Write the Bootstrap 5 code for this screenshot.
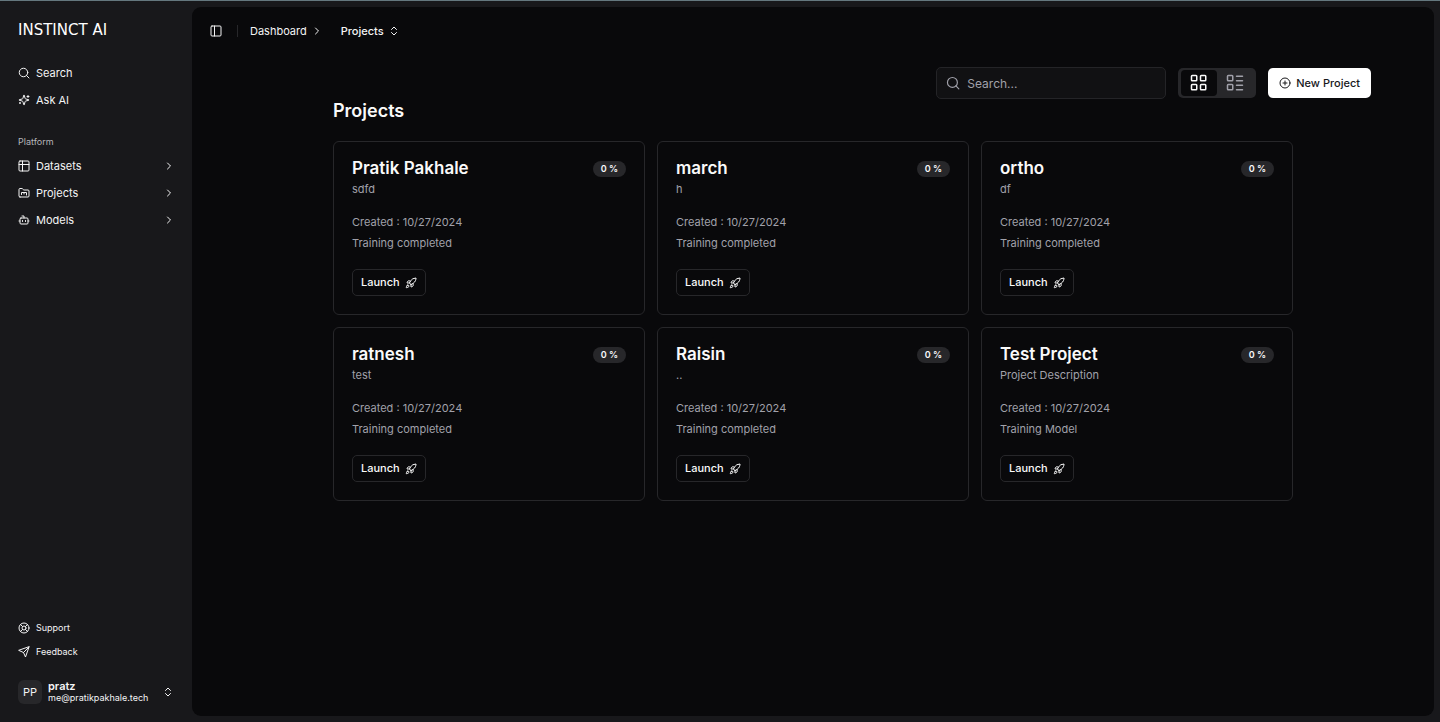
<!DOCTYPE html>
<html lang="en" data-bs-theme="dark">
<head>
<meta charset="utf-8">
<meta name="viewport" content="width=device-width, initial-scale=1">
<title>Projects</title>
<link href="https://cdn.jsdelivr.net/npm/bootstrap@5.3.0/dist/css/bootstrap.min.css" rel="stylesheet">
<style>
:root { --side:#18181b; --base:#09090b; --line:#27272a; --dim:#a1a1aa; --lite:#fafafa; --soft:#f4f4f5; }
body { font-family:Inter,sans-serif; font-size:11px; line-height:15px; background:var(--side); color:var(--soft); border-top:1px solid #64777e; }
svg { fill:none; stroke:currentColor; stroke-width:2; stroke-linecap:round; stroke-linejoin:round; flex:none; width:12px; height:12px; display:block; }
a { color:inherit; text-decoration:none; }
.shell { min-height:calc(100vh - 1px); }
.sidebar { width:192px; padding:6px 12px 12px; flex:none; }
.brand { font:15px/18px "DejaVu Sans",sans-serif; padding:14px 6px 22px; color:#fff; }
.side-list { display:flex; flex-direction:column; gap:3px; }
.side-list a { display:flex; align-items:center; gap:6px; height:24px; padding:0 5px 0 6px; border-radius:5px; }
.side-list a:hover { background:var(--line); }
.side-label { font-size:9px; color:#b5b5ba; padding:0 6px; line-height:24px; margin-top:18px; }
.side-small { font-size:9px; }
.side-small a { height:21px; }
.icon-btn { border:0; background:none; padding:0; color:inherit; }
.user { padding:6px; margin-top:12px; gap:6px; line-height:12px; font-size:9px; }
.user strong { font-size:11px; font-weight:600; }
.avatar { width:24px; height:24px; border-radius:6px; background:var(--line); font-size:11px; }
.panel { background:var(--base); border-radius:9px; margin:6px 6px 6px 0; min-width:0; }
.topbar { height:48px; padding:0 18px; }
.topbar .rule { width:1px; height:12px; background:var(--line); margin:0 12px 0 15px; }
.crumbs .icon-btn { margin-left:18px; }
.toolbar { gap:12px; padding:12px 63px 0 18px; }
.search { position:relative; width:230px; }
.search svg { position:absolute; left:10px; top:9px; width:14px; height:14px; color:var(--dim); }
.search input { height:32px; padding:0 10px 0 30px; font-size:12px; border:1px solid #242427; border-radius:5px; background:#111113; color:var(--lite); }
.search input::placeholder { color:var(--dim); }
.switcher { background:var(--line); border-radius:5px; padding:2px 3px; height:30px; }
.switcher button { width:36px; border:0; background:none; border-radius:4px; color:var(--dim); }
.switcher button[aria-pressed=true] { background:var(--base); color:var(--lite); }
.switcher svg { width:18px; height:18px; }
.btn { --bs-btn-font-size:11px; --bs-btn-font-weight:500; --bs-btn-border-radius:5px; --bs-btn-line-height:15px; display:inline-flex; align-items:center; gap:5px; }
.btn-new { --bs-btn-bg:#fff; --bs-btn-color:#18181b; --bs-btn-hover-bg:#e4e4e7; --bs-btn-hover-color:#18181b; height:30px; padding:0 10px; }
.btn-launch { --bs-btn-color:var(--lite); --bs-btn-border-color:var(--line); --bs-btn-hover-bg:var(--line); --bs-btn-hover-color:var(--lite); height:27px; padding:0 8px; }
.projects { max-width:960px; width:100%; margin:0 auto; }
.projects h1 { font-size:18px; line-height:24px; font-weight:600; color:var(--lite); margin:0 0 18px; }
.project-grid { --bs-gutter-x:12px; --bs-gutter-y:12px; }
.project { --bs-card-bg:var(--base); --bs-card-border-color:var(--line); --bs-card-border-radius:6px; padding:16px 18px 18px; color:var(--dim); }
.project h2 { font-size:17px; line-height:21px; font-weight:600; color:var(--lite); margin:0; }
.project p { margin:0; line-height:21px; }
.project .details { margin:12px 0 15px; }
.percent { font-size:9px; font-weight:600; line-height:12px; padding:2px 8px; border-radius:8px; background:var(--line); color:var(--lite); }
</style>
</head>
<body>
<svg class="d-none" aria-hidden="true">
<symbol id="search" viewBox="0 0 24 24"><circle cx="11" cy="11" r="8.500"/><path d="m22 22-5-5"/></symbol>
<symbol id="sparkles" viewBox="0 0 24 24"><path d="M9.937 15.5A2 2 0 0 0 8.5 14.063l-6.135-1.582a.5.5 0 0 1 0-.962L8.5 9.936A2 2 0 0 0 9.937 8.5l1.582-6.135a.5.5 0 0 1 .963 0L14.063 8.5A2 2 0 0 0 15.5 9.937l6.135 1.581a.5.5 0 0 1 0 .964L15.5 14.063a2 2 0 0 0-1.437 1.437l-1.582 6.135a.5.5 0 0 1-.963 0z"/><path d="M20 3v4M22 5h-4M4 17v2M5 18H3"/></symbol>
<symbol id="table" viewBox="0 0 24 24"><rect width="20" height="20" x="2" y="2" rx="2"/><path d="M9 2v20M2 9h20"/></symbol>
<symbol id="folder" viewBox="0 0 24 24"><path d="M4 20h16a2 2 0 0 0 2-2V8a2 2 0 0 0-2-2h-7.93a2 2 0 0 1-1.66-.9l-.82-1.2A2 2 0 0 0 7.930 3H4a2 2 0 0 0-2 2v13c0 1.100.9 2 2 2Z"/><path d="M7 15v-4h10v5M12 11v3"/></symbol>
<symbol id="bot" viewBox="0 0 24 24"><path d="M12 8V4H8"/><rect width="16" height="12" x="4" y="8" rx="2"/><path d="M2 14h2M20 14h2M15 13v2M9 13v2"/></symbol>
<symbol id="right" viewBox="0 0 24 24"><path d="m9 18 6-6-6-6"/></symbol>
<symbol id="updown" viewBox="0 0 24 24"><path d="m7 15 5 5 5-5M7 9l5-5 5 5"/></symbol>
<symbol id="support" viewBox="0 0 24 24"><circle cx="12" cy="12" r="10"/><path d="m4.930 4.930 4.240 4.240M14.830 9.170l4.240-4.240M14.830 14.830l4.240 4.240M9.170 14.830l-4.240 4.240"/><circle cx="12" cy="12" r="4"/></symbol>
<symbol id="send" viewBox="0 0 24 24"><path d="m22 2-7 20-4-9-9-4ZM22 2 11 13"/></symbol>
<symbol id="panel" viewBox="0 0 24 24"><rect width="20" height="20" x="2" y="2" rx="2"/><path d="M9 2v20"/></symbol>
<symbol id="grid" viewBox="0 0 24 24"><rect width="7" height="7" x="2" y="2" rx="1"/><rect width="7" height="7" x="14" y="2" rx="1"/><rect width="7" height="7" x="14" y="14" rx="1"/><rect width="7" height="7" x="2" y="14" rx="1"/></symbol>
<symbol id="rows" viewBox="0 0 24 24"><rect width="7" height="7" x="2" y="2" rx="1"/><rect width="7" height="7" x="2" y="14" rx="1"/><path d="M14 3h8M14 9h8M14 15h8M14 21h8"/></symbol>
<symbol id="plus" viewBox="0 0 24 24"><circle cx="12" cy="12" r="10"/><path d="M8 12h8M12 8v8"/></symbol>
<symbol id="rocket" viewBox="0 0 24 24"><path d="M4.500 16.500c-1.500 1.260-2 5-2 5s3.740-.5 5-2c.71-.84.7-2.130-.09-2.910a2.180 2.180 0 0 0-2.910-.09z"/><path d="m12 15-3-3a22 22 0 0 1 2-3.950A12.880 12.880 0 0 1 22 2c0 2.720-.78 7.500-6 11a22.350 22.350 0 0 1-4 2z"/><path d="M9 12H4s.55-3.030 2-4c1.620-1.080 5 0 5 0M12 15v5s3.030-.55 4-2c1.080-1.620 0-5 0-5"/></symbol>
</svg>
<div class="shell d-flex">
<aside class="sidebar d-flex flex-column">
<a class="brand" href="#">INSTINCT AI</a>
<nav class="side-list" aria-label="Tools">
<a href="#"><svg><use href="#search"/></svg>Search</a>
<a href="#"><svg><use href="#sparkles"/></svg>Ask AI</a>
</nav>
<div class="side-label">Platform</div>
<nav class="side-list" aria-label="Platform">
<a href="#"><svg><use href="#table"/></svg>Datasets<svg class="ms-auto"><use href="#right"/></svg></a>
<a href="#"><svg><use href="#folder"/></svg>Projects<svg class="ms-auto"><use href="#right"/></svg></a>
<a href="#"><svg><use href="#bot"/></svg>Models<svg class="ms-auto"><use href="#right"/></svg></a>
</nav>
<nav class="side-list side-small mt-auto" aria-label="Help">
<a href="#"><svg><use href="#support"/></svg>Support</a>
<a href="#"><svg><use href="#send"/></svg>Feedback</a>
</nav>
<button type="button" class="icon-btn user d-flex align-items-center text-start">
<span class="avatar d-flex align-items-center justify-content-center">PP</span>
<span class="d-flex flex-column"><strong>pratz</strong><span>me@pratikpakhale.tech</span></span>
<svg class="ms-auto"><use href="#updown"/></svg>
</button>
</aside>
<main class="panel flex-grow-1">
<header class="topbar d-flex align-items-center">
<button type="button" class="icon-btn" aria-label="Toggle sidebar"><svg><use href="#panel"/></svg></button>
<span class="rule"></span>
<nav class="crumbs d-flex align-items-center" aria-label="Breadcrumb">
<a href="#">Dashboard</a>
<svg class="ms-1"><use href="#right"/></svg>
<button type="button" class="icon-btn d-flex align-items-center fw-medium gap-1">Projects<svg><use href="#updown"/></svg></button>
</nav>
</header>
<div class="toolbar d-flex flex-wrap justify-content-end align-items-center">
<div class="search"><svg><use href="#search"/></svg><input class="form-control" type="search" placeholder="Search..." aria-label="Search projects"></div>
<div class="switcher d-flex" role="group" aria-label="View">
<button type="button" class="d-flex align-items-center justify-content-center" aria-pressed="true" aria-label="Grid view"><svg><use href="#grid"/></svg></button>
<button type="button" class="d-flex align-items-center justify-content-center" aria-pressed="false" aria-label="List view"><svg><use href="#rows"/></svg></button>
</div>
<button type="button" class="btn btn-new"><svg><use href="#plus"/></svg>New Project</button>
</div>
<section class="projects">
<h1>Projects</h1>
<div class="project-grid row row-cols-1 row-cols-md-2 row-cols-lg-3">
<div class="col"><article class="card project"><div class="d-flex justify-content-between align-items-center"><h2>Pratik Pakhale</h2><span class="percent">0 %</span></div><p>sdfd</p><div class="details"><p>Created : 10/27/2024</p><p>Training completed</p></div><div class="d-flex"><button type="button" class="btn btn-launch">Launch<svg><use href="#rocket"/></svg></button></div></article></div>
<div class="col"><article class="card project"><div class="d-flex justify-content-between align-items-center"><h2>march</h2><span class="percent">0 %</span></div><p>h</p><div class="details"><p>Created : 10/27/2024</p><p>Training completed</p></div><div class="d-flex"><button type="button" class="btn btn-launch">Launch<svg><use href="#rocket"/></svg></button></div></article></div>
<div class="col"><article class="card project"><div class="d-flex justify-content-between align-items-center"><h2>ortho</h2><span class="percent">0 %</span></div><p>df</p><div class="details"><p>Created : 10/27/2024</p><p>Training completed</p></div><div class="d-flex"><button type="button" class="btn btn-launch">Launch<svg><use href="#rocket"/></svg></button></div></article></div>
<div class="col"><article class="card project"><div class="d-flex justify-content-between align-items-center"><h2>ratnesh</h2><span class="percent">0 %</span></div><p>test</p><div class="details"><p>Created : 10/27/2024</p><p>Training completed</p></div><div class="d-flex"><button type="button" class="btn btn-launch">Launch<svg><use href="#rocket"/></svg></button></div></article></div>
<div class="col"><article class="card project"><div class="d-flex justify-content-between align-items-center"><h2>Raisin</h2><span class="percent">0 %</span></div><p>..</p><div class="details"><p>Created : 10/27/2024</p><p>Training completed</p></div><div class="d-flex"><button type="button" class="btn btn-launch">Launch<svg><use href="#rocket"/></svg></button></div></article></div>
<div class="col"><article class="card project"><div class="d-flex justify-content-between align-items-center"><h2>Test Project</h2><span class="percent">0 %</span></div><p>Project Description</p><div class="details"><p>Created : 10/27/2024</p><p>Training Model</p></div><div class="d-flex"><button type="button" class="btn btn-launch">Launch<svg><use href="#rocket"/></svg></button></div></article></div>
</div>
</section>
</main>
</div>
<script src="https://cdn.jsdelivr.net/npm/bootstrap@5.3.0/dist/js/bootstrap.bundle.min.js"></script>
</body>
</html>
